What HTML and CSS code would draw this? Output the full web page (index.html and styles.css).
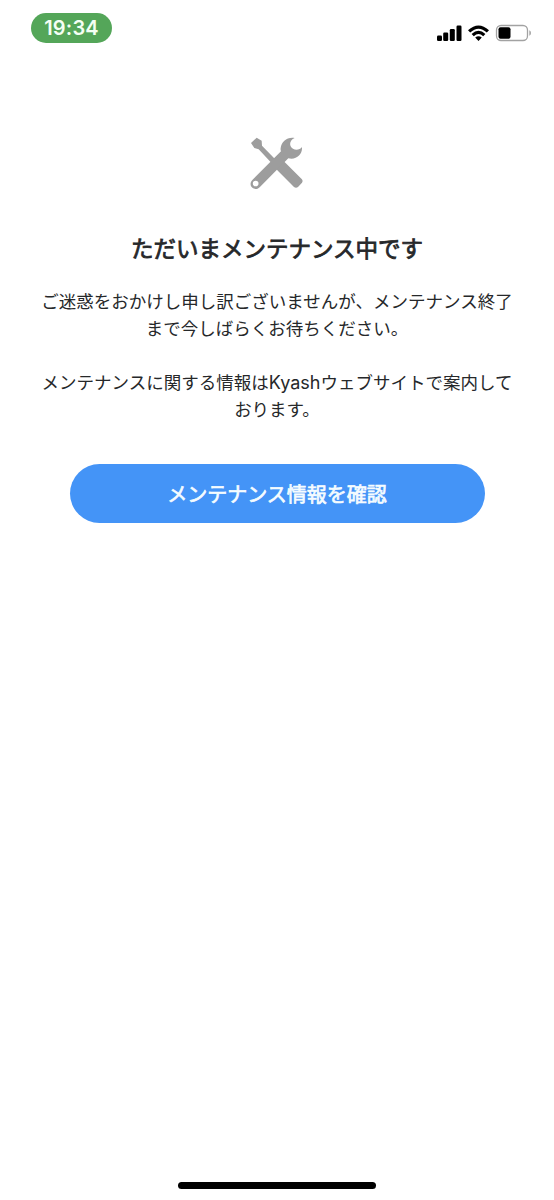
FILE: index.html
```html
<!DOCTYPE html>
<html lang="ja">
<head>
<meta charset="utf-8">
<title>メンテナンス</title>
<link rel="stylesheet" href="styles.css">
</head>
<body>
<div class="screen">
  <header class="status">
    <div class="time">19:34</div>
    <svg class="signals" width="96" height="20" viewBox="0 0 96 20">
      <rect x="1" y="12.500" width="5" height="5.5" rx="1.2"/>
      <rect x="7.2" y="9.5" width="5" height="8.500" rx="1.2"/>
      <rect x="13.800" y="6" width="5" height="12" rx="1.200"/>
      <rect x="20.500" y="2.500" width="5" height="15.500" rx="1.200"/>
      <path d="M32 7.300Q42.500-2.500 53 7.300L50.800 9.500Q42.500 1.800 34.200 9.500ZM35.600 11Q42.500 4.700 49.400 11L47.200 13.200Q42.500 9 37.800 13.200ZM39.200 14.600Q42.500 11.800 45.800 14.600L42.500 18Z"/>
      <rect class="shell" x="60.500" y="2.500" width="31" height="15" rx="4.500"/>
      <rect x="62.500" y="4.300" width="12" height="11.500" rx="2"/>
      <path class="terminal" d="M93.300 7.300Q95 8 95 10T93.300 12.700Z"/>
    </svg>
  </header>
  <main class="content">
    <svg class="tools" width="75" height="75" viewBox="0 0 225 225">
      <path d="M33 54L50 38L65 47L66 62L110 107L98 118L56 73L43 69ZM130 107L185 162Q190 168 186 173L174 186Q168 191 162 186L100 124Z"/>
      <path fill-rule="evenodd" d="M164 39C142 35 124 50 122 69Q121 75 123 79L37 165C25 178 35 194 51 192Q55 191 59 187L145 100C169 106 188 88 186 66C180 74 168 77 159 71C145 63 149 45 164 39ZM47 167A8.500 8.500 0 1 1 47 184A8.500 8.500 0 1 1 47 167Z"/>
    </svg>
    <h1 class="title">ただいまメンテナンス中です</h1>
    <p class="message">ご迷惑をおかけし申し訳ございませんが、メンテナンス終了<br>まで今しばらくお待ちください。</p>
    <p class="message">メンテナンスに関する情報は<span class="brand">Kyash</span>ウェブサイトで案内して<br>おります。</p>
    <button class="action">メンテナンス情報を確認</button>
  </main>
  <div class="home-bar"></div>
</div>
</body>
</html>
```
FILE: styles.css
```css
* { box-sizing: border-box; }
body {
  margin: 0;
  background: #fff;
  color: #26282a;
  font-family: Inter, "Noto Sans CJK JP", sans-serif;
}
.screen {
  height: 1200px;
  display: flex;
  flex-direction: column;
  align-items: center;
}
.status {
  width: 100%;
  height: 125px;
  padding: 13px 22px 0 31px;
  display: flex;
  justify-content: space-between;
  align-items: flex-start;
}
.time {
  width: 81px;
  height: 30px;
  border-radius: 15px;
  background: #54a659;
  color: #f4fff4;
  font-size: 20px;
  font-weight: 600;
  letter-spacing: 0.2px;
  line-height: 31px;
  text-align: center;
}
.signals { margin-top: 10px; }
.shell { fill: none; stroke: #a2a2a2; stroke-width: 1.3; }
.terminal { fill: #a2a2a2; }
.content {
  width: 100%;
  flex: 1;
  display: flex;
  flex-direction: column;
  align-items: center;
}
.tools { display: block; margin-left: 1px; fill: #9d9d9d; }
.title {
  margin: 31px 0 23px;
  font-family: "Noto Sans CJK JP", sans-serif;
  font-size: 22.5px;
  font-weight: 400;
  -webkit-text-stroke: 0.8px currentColor;
  line-height: 33px;
  white-space: nowrap;
}
.message {
  margin: 0 0 27px;
  font-family: "Noto Sans CJK JP", sans-serif;
  font-size: 17.5px;
  line-height: 27px;
  text-align: center;
  white-space: nowrap;
}
.brand { font-family: Inter, sans-serif; font-size: 18px; line-height: 1; }
.action {
  width: 415px;
  height: 59px;
  margin-top: 15px;
  padding: 0 0 1px;
  border: 0;
  border-radius: 30px;
  background: #4494f7;
  color: #f5fcff;
  font-family: "Noto Sans CJK JP", sans-serif;
  font-size: 20px;
  font-weight: 400;
  -webkit-text-stroke: 0.7px currentColor;
}
.home-bar {
  width: 198px;
  height: 7px;
  margin-bottom: 11px;
  border-radius: 4px;
  background: #000;
}
```
